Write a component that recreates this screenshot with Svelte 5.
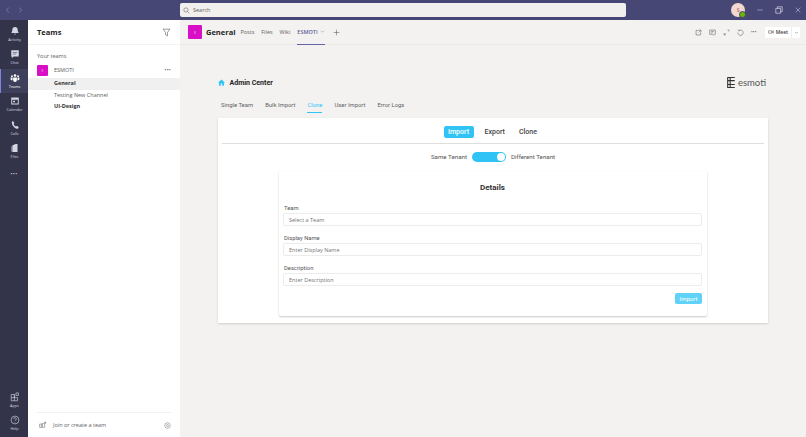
<script lang="ts">
  const railTop = [
    { label: "Activity", icon: "bell" },
    { label: "Chat", icon: "chat" },
    { label: "Teams", icon: "teams", active: true },
    { label: "Calendar", icon: "calendar" },
    { label: "Calls", icon: "calls" },
    { label: "Files", icon: "files" },
  ];
  const channelTabs = ["Posts", "Files", "Wiki"];
  const adminTabs = ["Single Team", "Bulk Import", "Clone", "User Import", "Error Logs"];
  const fields = [
    { label: "Team", hint: "Select a Team" },
    { label: "Display Name", hint: "Enter Display Name" },
    { label: "Description", hint: "Enter Description" },
  ];
</script>

{#snippet railIcon(name: string)}
  <svg class="rail-icon" viewBox="0 0 16 16" fill="currentColor">
    {#if name === "bell"}
      <path d="M8 1.5a4.2 4.2 0 0 0-4.2 4.2c0 3.4-1.3 4.6-1.8 5.3h12c-.5-.7-1.8-1.9-1.8-5.3A4.2 4.2 0 0 0 8 1.5zM6.2 12.2a1.9 1.9 0 0 0 3.6 0z" />
    {:else if name === "chat"}
      <path fill-rule="evenodd" d="M2 2h12v10H6l-3 2.5V12H2zM4.5 5v1h7V5zm0 2.5v1h5v-1z" />
    {:else if name === "teams"}
      <circle cx="8" cy="4" r="2" /><circle cx="3.2" cy="5" r="1.5" /><circle cx="12.8" cy="5" r="1.5" />
      <path d="M5 7h6v4.2a3 3 0 0 1-6 0zM1 7.2h3v4.3H2.6A1.6 1.6 0 0 1 1 9.9zM12 7.2h3v2.7a1.6 1.6 0 0 1-1.6 1.6H12z" />
    {:else if name === "calendar"}
      <path fill-rule="evenodd" d="M2 2.5h12v11H2zM3.5 6v6h9V6zM5 7.5h3V10H5z" />
    {:else if name === "calls"}
      <path d="M4.5 1.5 7 4.2 5.8 6.2c.6 1.6 1.8 3 3.7 4l2-1 2.5 2.6-1.5 2.2C7.5 14 2.5 8 3 3z" />
    {:else}
      <path d="M4 3.5 9 1.5h3v13H4zM2.5 5H3.5v9h-1z" />
    {/if}
  </svg>
{/snippet}

<div class="window">
  <header class="titlebar">
    <div class="history">
      <svg viewBox="0 0 10 10"><path d="M6 2 3 5l3 3" /></svg>
      <svg viewBox="0 0 10 10"><path d="m4 2 3 3-3 3" /></svg>
    </div>
    <div class="search">
      <svg viewBox="0 0 10 10"><circle cx="4.2" cy="4.2" r="3" /><path d="m6.5 6.5 2.7 2.7" /></svg>
      <span>Search</span>
    </div>
    <div class="account">
      <div class="me">S<i></i></div>
      <svg viewBox="0 0 10 10"><path d="M1.5 5h7" /></svg>
      <svg viewBox="0 0 10 10"><path d="M1 3h6v6H1zM3 3V1h6v6H7" /></svg>
      <svg viewBox="0 0 10 10"><path d="m2 2 6 6M8 2 2 8" /></svg>
    </div>
  </header>

  <div class="body">
    <nav class="rail">
      {#each railTop as item}
        <div class="rail-item" class:active={item.active}>
          {@render railIcon(item.icon)}
          <span>{item.label}</span>
        </div>
      {/each}
      <div class="rail-more">•••</div>
      <div class="rail-bottom">
        <div class="rail-item">
          <svg class="rail-icon line" viewBox="0 0 16 16"><path d="M2 4h5v10H2zM2 9h10v5H7M7 4v5M9.5 1.5h4v4h-4z" /></svg>
          <span>Apps</span>
        </div>
        <div class="rail-item">
          <svg class="rail-icon line" viewBox="0 0 16 16"><circle cx="8" cy="8" r="6.3" /><path d="M6 6.3a2 2 0 1 1 3 1.7c-.7.4-1 .8-1 1.6M8 11v1" /></svg>
          <span>Help</span>
        </div>
      </div>
    </nav>

    <aside class="sidebar">
      <div class="side-head">
        <h2>Teams</h2>
        <svg viewBox="0 0 12 12"><path d="M1.5 1.5h9L7.3 6v4.5L4.7 9V6z" /></svg>
      </div>
      <div class="side-list">
        <div class="your-teams">Your teams</div>
        <div class="team-row">
          <div class="tile small">E</div>
          <span>ESMOTI</span>
          <b class="dots">•••</b>
        </div>
        <div class="channel selected">General</div>
        <div class="channel">Testing New Channel</div>
        <div class="channel strong">UI-Design</div>
      </div>
      <div class="side-foot">
        <svg class="join" viewBox="0 0 12 12"><path d="M1 4.5h3v5H1zM5 3.5h3.5v6H5zM9.5 1v3M8 2.5h3" /></svg>
        <span>Join or create a team</span>
        <svg class="gear" viewBox="0 0 12 12"><circle cx="6" cy="6" r="4.7" /><circle cx="6" cy="6" r="1.7" /></svg>
      </div>
    </aside>

    <main class="main">
      <div class="channel-bar">
        <div class="tile">E</div>
        <h1>General</h1>
        {#each channelTabs as tab}
          <span class="ctab">{tab}</span>
        {/each}
        <span class="ctab current">ESMOTI
          <svg viewBox="0 0 10 10"><path d="m2 3.5 3 3 3-3" /></svg>
        </span>
        <svg class="plus" viewBox="0 0 10 10"><path d="M5 1v8M1 5h8" /></svg>
        <div class="tools">
          <svg viewBox="0 0 10 10"><path d="M5 2H1.5v6.5H8V5M5.5 1.5h3v3M8.5 1.5 5 5" /></svg>
          <svg viewBox="0 0 10 10"><path d="M1 1.5h8v6H7.5L6 9 4.5 7.5H1zM3 3.5h4M3 5.5h2.5" /></svg>
          <svg viewBox="0 0 10 10"><path d="M1.5 6v2.5H4M1.5 8.5 4 6M6.5 1.5h2v2" /></svg>
          <svg viewBox="0 0 10 10"><path d="M2.4 2.5A3.8 3.8 0 1 1 1.2 5M2.4 1v1.5h1.5" /></svg>
          <b>•••</b>
          <div class="meet">
            <span class="meet-main">
              <svg viewBox="0 0 10 10"><path d="M1 3h5.5v4H1zM6.5 4.5 9 3v4L6.5 5.5" /></svg>
              Meet
            </span>
            <span class="meet-drop"><svg viewBox="0 0 10 10"><path d="m2.5 4 2.5 2.5L7.5 4" /></svg></span>
          </div>
        </div>
      </div>

      <div class="admin">
        <div class="admin-head">
          <div class="admin-title">
            <svg viewBox="0 0 10 10"><path d="M5 .8 0 5.2h1.5v4.3H4v-3h2v3h2.5V5.2H10z" /></svg>
            <strong>Admin Center</strong>
          </div>
          <div class="logo">
            <svg viewBox="0 0 12 14"><path d="M1.5 1h9M1.5 4.7h9M1.5 9.3h9M1.5 13h9M2 1v12M5 1v12" /></svg>
            <span>esmoti</span>
          </div>
        </div>
        <div class="admin-tabs">
          {#each adminTabs as tab}
            <span class:on={tab === "Clone"}>{tab}</span>
          {/each}
        </div>

        <section class="panel">
          <div class="segments">
            <span class="seg on">Import</span>
            <span class="seg">Export</span>
            <span class="seg">Clone</span>
          </div>
          <div class="tenant">
            <span>Same Tenant</span>
            <div class="switch"><i></i></div>
            <span>Different Tenant</span>
          </div>
          <div class="details">
            <h3>Details</h3>
            {#each fields as field}
              <div class="label">{field.label}</div>
              <input placeholder={field.hint} />
            {/each}
            <div class="actions"><button>Import</button></div>
          </div>
        </section>
      </div>
    </main>
  </div>
</div>

<style>
  :global(body) {
    margin: 0;
  }

  svg {
    fill: none;
    stroke: currentColor;
    stroke-width: 0.8;
    display: block;
  }

  .window {
    width: 806px;
    height: 437px;
    overflow: hidden;
    display: flex;
    flex-direction: column;
    font-family: "Open Sans", "Liberation Sans", sans-serif;
    background: #f3f2f1;
    color: #252423;
  }

  .titlebar {
    height: 20px;
    flex: none;
    background: #464775;
    display: flex;
    align-items: center;
    color: #c5c6e2;
  }

  .history {
    width: 180px;
    display: flex;
    gap: 4px;
    padding-left: 4px;
    box-sizing: border-box;
  }

  .history svg {
    width: 8px;
    height: 8px;
    color: #8f90bb;
  }

  .search {
    width: 446px;
    height: 14px;
    background: #f1f0ee;
    border-radius: 2px;
    display: flex;
    align-items: center;
    gap: 3px;
    padding-left: 3px;
    box-sizing: border-box;
    font-size: 5.5px;
    color: #616161;
  }

  .search svg {
    width: 7px;
    height: 7px;
  }

  .account {
    margin-left: 105px;
    display: flex;
    align-items: center;
    gap: 11px;
    color: #b9bad8;
  }

  .account svg {
    width: 8px;
    height: 8px;
  }

  .account svg:nth-of-type(2) {
    color: #e4e4f1;
  }

  .me {
    width: 14px;
    height: 14px;
    border-radius: 50%;
    background: #f3d6d0;
    color: #7c4a3a;
    font-size: 5px;
    display: grid;
    place-items: center;
    position: relative;
  }

  .me i {
    position: absolute;
    right: -1px;
    bottom: -1px;
    width: 5px;
    height: 5px;
    border-radius: 50%;
    background: #6bb700;
    border: 0.5px solid #464775;
  }

  .body {
    flex: 1;
    display: flex;
    min-height: 0;
  }

  .rail {
    width: 28px;
    flex: none;
    background: #33344a;
    display: flex;
    flex-direction: column;
    color: #d5d5e3;
    padding-top: 2px;
    box-sizing: border-box;
  }

  .rail-item {
    height: 23.5px;
    display: flex;
    flex-direction: column;
    align-items: center;
    justify-content: center;
    font-size: 3.8px;
    line-height: 5px;
    box-sizing: border-box;
    border-left: 1px solid transparent;
  }

  .rail-item.active {
    color: #fff;
    background: #3e3f5a;
    border-left-color: #7b83eb;
  }

  .rail-icon {
    width: 10px;
    height: 10px;
    fill: currentColor;
    stroke: none;
    margin-bottom: 1px;
  }

  .rail-icon.line {
    fill: none;
    stroke: currentColor;
    stroke-width: 1;
  }

  .rail-more {
    text-align: center;
    font-size: 5px;
    letter-spacing: 0.5px;
    line-height: 8px;
    margin-top: 7px;
  }

  .rail-bottom {
    margin-top: auto;
    padding-bottom: 2px;
  }

  .sidebar {
    width: 152px;
    flex: none;
    background: #fff;
    display: flex;
    flex-direction: column;
  }

  .side-head {
    height: 25px;
    flex: none;
    display: flex;
    align-items: center;
    justify-content: space-between;
    padding: 0 9px;
    border-bottom: 1px solid #f3f2f1;
    box-sizing: border-box;
  }

  .side-head h2 {
    margin: 0;
    font-size: 7.5px;
    font-weight: 700;
  }

  .side-head svg {
    width: 9px;
    height: 9px;
    color: #555;
  }

  .side-list {
    flex: 1;
    font-size: 5.5px;
    padding-top: 7px;
  }

  .your-teams {
    padding-left: 9px;
    color: #616161;
    line-height: 8px;
  }

  .team-row {
    display: flex;
    align-items: center;
    height: 14px;
    margin: 3px 0 1px;
    padding: 0 9px;
    color: #616161;
    gap: 6px;
  }

  .dots {
    margin-left: auto;
    font-size: 5px;
    font-weight: 400;
    letter-spacing: 0.3px;
    color: #555;
  }

  .tile {
    width: 14px;
    height: 14px;
    background: #d80fc4;
    color: #f7c3f0;
    border-radius: 1px;
    display: grid;
    place-items: center;
    font-size: 4px;
  }

  .tile.small {
    width: 11px;
    height: 11px;
    font-size: 3.5px;
  }

  .channel {
    height: 11.5px;
    line-height: 11.5px;
    padding-left: 26px;
    color: #616161;
  }

  .channel.selected {
    background: #f0f0f0;
    font-weight: 700;
    color: #333;
  }

  .channel.strong {
    font-weight: 700;
    color: #333;
  }

  .side-foot {
    height: 24px;
    flex: none;
    margin: 0 9px;
    border-top: 1px solid #f3f2f1;
    display: flex;
    align-items: center;
    font-size: 5.5px;
    color: #616161;
  }

  .join {
    width: 8px;
    height: 8px;
    margin: 0 6px 0 2px;
  }

  .gear {
    width: 7px;
    height: 7px;
    margin-left: auto;
  }

  .main {
    flex: 1;
    min-width: 0;
    display: flex;
    flex-direction: column;
  }

  .channel-bar {
    height: 25px;
    flex: none;
    display: flex;
    align-items: center;
    padding-left: 8px;
    border-bottom: 1px solid #ebe9e8;
    box-sizing: border-box;
    font-size: 5.5px;
    color: #616161;
  }

  .channel-bar h1 {
    margin: 0 5px 0 4px;
    font-size: 7.5px;
    font-weight: 700;
    color: #252423;
  }

  .ctab {
    margin-right: 7px;
    display: flex;
    align-items: center;
    gap: 2px;
  }

  .ctab svg {
    width: 5px;
    height: 5px;
  }

  .ctab.current {
    color: #5c5e96;
    font-weight: 600;
    height: 25px;
    box-sizing: border-box;
    border-bottom: 1px solid #6264a7;
  }

  .plus {
    width: 7px;
    height: 7px;
    margin-left: 1px;
  }

  .tools {
    margin-left: auto;
    display: flex;
    align-items: center;
    gap: 7px;
    padding-right: 6px;
  }

  .tools > svg {
    width: 7px;
    height: 7px;
  }

  .tools b {
    font-size: 4.5px;
    font-weight: 400;
    letter-spacing: 0.2px;
  }

  .meet {
    display: flex;
    background: #fff;
    height: 11px;
    margin-left: 1px;
    border-radius: 1px;
    align-items: center;
    font-size: 5px;
    font-weight: 600;
    color: #444;
  }

  .meet-main {
    display: flex;
    align-items: center;
    gap: 2px;
    padding: 0 3px;
    border-right: 1px solid #eee;
    height: 100%;
  }

  .meet-main svg {
    width: 6px;
    height: 6px;
  }

  .meet-drop {
    width: 8px;
    display: grid;
    place-items: center;
  }

  .meet-drop svg {
    width: 5px;
    height: 5px;
  }

  .admin {
    padding: 31px 38px 0 38px;
  }

  .admin-head {
    display: flex;
    justify-content: space-between;
    align-items: center;
    height: 14px;
  }

  .admin-title {
    display: flex;
    align-items: center;
    gap: 4.5px;
    font-size: 7px;
    color: #252423;
    font-family: Roboto, sans-serif;
  }

  .admin-title svg {
    width: 7px;
    height: 7px;
    fill: #2fc4f5;
    stroke: none;
    margin-top: -2px;
  }

  .logo {
    display: flex;
    align-items: center;
    gap: 2px;
    margin: 0 2px 2px 0;
    font-family: Lato, sans-serif;
    font-size: 9.5px;
    color: #555;
  }

  .logo svg {
    width: 10px;
    height: 13px;
    stroke: #333;
    stroke-width: 1.3;
  }

  .admin-tabs {
    display: flex;
    gap: 12px;
    margin-top: 9px;
    padding-left: 3px;
    height: 19px;
    font-family: Roboto, sans-serif;
    font-size: 5.9px;
    color: #616161;
  }

  .admin-tabs span {
    height: 14px;
    line-height: 13px;
    box-sizing: border-box;
  }

  .admin-tabs span.on {
    color: #2fc4f5;
    border-bottom: 1px solid #2fc4f5;
  }

  .panel {
    background: #fff;
    height: 205px;
    box-shadow: 0 1px 2px rgba(0, 0, 0, 0.15);
    padding: 8px 4px 0;
    font-family: Roboto, sans-serif;
    box-sizing: border-box;
  }

  .segments {
    display: flex;
    justify-content: center;
    align-items: center;
    height: 12px;
    padding: 0 5px 5px 0;
    border-bottom: 1px solid #dedede;
    gap: 11px;
    font-size: 7px;
    font-weight: 500;
    color: #444;
  }

  .seg {
    width: 19px;
    text-align: center;
  }

  .seg:last-child {
    margin-left: 4px;
  }

  .seg.on {
    width: 30px;
    height: 12px;
    line-height: 12px;
    background: #2fc4f5;
    color: #fff;
    border-radius: 2px;
  }

  .tenant {
    display: flex;
    justify-content: center;
    align-items: center;
    gap: 5px;
    height: 10px;
    margin-top: 8px;
    font-size: 6.2px;
    color: #555;
  }

  .switch {
    width: 34px;
    height: 10px;
    border-radius: 5px;
    background: #2fc4f5;
    display: flex;
    justify-content: flex-end;
    align-items: center;
    padding-right: 1px;
    box-sizing: border-box;
  }

  .switch i {
    width: 8px;
    height: 8px;
    border-radius: 50%;
    background: #fff;
  }

  .details {
    width: 428px;
    height: 145px;
    margin: 9px auto 0;
    padding: 0 5px 0 4px;
    box-sizing: border-box;
    background: #fff;
    border-radius: 2px;
    box-shadow: 0 1px 2px rgba(0, 0, 0, 0.22);
  }

  .details h3 {
    margin: 0;
    padding-top: 12px;
    height: 32px;
    box-sizing: border-box;
    text-align: center;
    font-size: 8px;
    font-weight: 700;
    color: #333;
    line-height: 10px;
  }

  .label {
    font-size: 5.8px;
    color: #555;
    height: 10px;
    line-height: 10px;
    padding-left: 1px;
  }

  input {
    display: block;
    width: 100%;
    height: 13px;
    box-sizing: border-box;
    border: 1px solid #ececec;
    border-radius: 2px;
    padding: 0 5px;
    margin-bottom: 7px;
    font-family: "Open Sans", sans-serif;
    font-size: 5.5px;
    outline: none;
  }

  input::placeholder {
    color: #757575;
  }

  .actions {
    display: flex;
    justify-content: flex-end;
    margin-top: 2px;
  }

  button {
    width: 27px;
    height: 11px;
    border: none;
    padding: 0;
    border-radius: 2px;
    background: #5fd2f7;
    color: #fff;
    font-family: Roboto, sans-serif;
    font-size: 6px;
  }
</style>
